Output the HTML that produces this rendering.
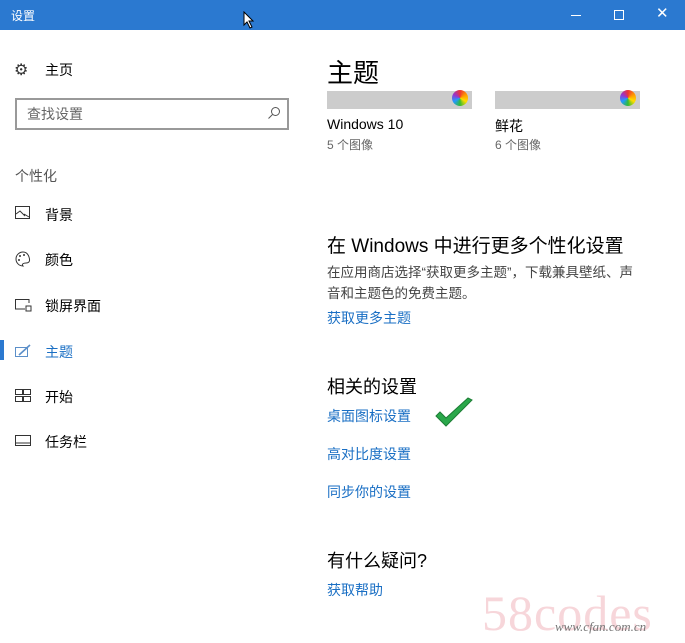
<!DOCTYPE html>
<html><head><meta charset="utf-8"><style>
*{margin:0;padding:0;box-sizing:border-box}
body{width:685px;height:643px;background:#fff;font-family:"Liberation Sans","Noto Sans CJK SC",sans-serif;position:relative;overflow:hidden;color:#000}
.a{position:absolute;white-space:nowrap}
.tb{position:absolute;left:0;top:0;width:685px;height:30px;background:#2b79d0}
.nav{font-size:14px;color:#000}
.lnk{font-size:14px;color:#1a6fc4}
.ic{position:absolute;left:15px}
</style></head><body>
<div class="tb"></div>
<div class="a" style="left:11px;top:7px;font-size:12px;color:#fff">设置</div>
<div class="a" style="left:571px;top:15px;width:10px;height:1px;background:#fff"></div>
<div class="a" style="left:614px;top:10px;width:10px;height:10px;border:1px solid #fff"></div>
<div class="a" style="left:656px;top:4px;font-size:15px;color:#fff">✕</div>
<svg class="a" style="left:243px;top:11px" width="12" height="18"><path d="M1 1 L1 14 L4 11 L7 17 L9 16 L6 10 L10 10 Z" fill="#fff" stroke="#000" stroke-width="1"/></svg>

<div class="a" style="left:14px;top:60px;font-size:16px;color:#333">⚙</div>
<div class="a nav" style="left:45px;top:60px">主页</div>
<div class="a" style="left:15px;top:98px;width:274px;height:32px;border:2px solid #999"></div>
<div class="a" style="left:27px;top:104px;font-size:14px;color:#666">查找设置</div>
<svg class="a" style="left:267px;top:106px" width="14" height="14"><circle cx="8.5" cy="5.5" r="4" fill="none" stroke="#555"/><path d="M5.5 8.5 L1.5 12.5" stroke="#555"/></svg>
<div class="a" style="left:15px;top:166px;font-size:14px;color:#555">个性化</div>

<svg class="ic" style="top:206px" width="16" height="14"><rect x="0.5" y="0.5" width="14" height="12" fill="none" stroke="#333"/><path d="M1 8 L5 5 L10 10 M9 8 L14 11" stroke="#333" fill="none"/></svg>
<div class="a nav" style="left:45px;top:205px">背景</div>
<svg class="ic" style="top:251px" width="16" height="16"><path d="M8 1 A7 7 0 1 0 8 15 C6 13 9 12 11 12 C15 12 15 9 14 6 C13 3 11 1 8 1Z" fill="none" stroke="#333"/><circle cx="5" cy="5" r="1" fill="#333"/><circle cx="9" cy="4" r="1" fill="#333"/><circle cx="4" cy="9" r="1" fill="#333"/></svg>
<div class="a nav" style="left:45px;top:250px">颜色</div>
<svg class="ic" style="top:298px" width="18" height="14"><path d="M10 11 H0.5 V1.5 H14 V5" fill="none" stroke="#333"/><rect x="11" y="8" width="5" height="5" fill="none" stroke="#333"/></svg>
<div class="a nav" style="left:45px;top:296px">锁屏界面</div>
<div class="a" style="left:0;top:340px;width:4px;height:20px;background:#2b79d0"></div>
<svg class="ic" style="top:344px" width="17" height="14"><rect x="0.5" y="3.5" width="12" height="9" fill="none" stroke="#5b8fc9"/><path d="M4 11 L15 1" stroke="#5b8fc9" stroke-width="1.6"/></svg>
<div class="a nav" style="left:45px;top:342px;color:#1a6fc4">主题</div>
<svg class="ic" style="top:389px" width="17" height="14"><rect x="0.5" y="0.5" width="7" height="5" fill="none" stroke="#333"/><rect x="8.5" y="0.5" width="7" height="5" fill="none" stroke="#333"/><rect x="0.5" y="7.5" width="7" height="5" fill="none" stroke="#333"/><rect x="8.5" y="7.5" width="7" height="5" fill="none" stroke="#333"/></svg>
<div class="a nav" style="left:45px;top:387px">开始</div>
<svg class="ic" style="top:435px" width="17" height="12"><rect x="0.5" y="0.5" width="15" height="10" fill="none" stroke="#333"/><path d="M1 8 H15" stroke="#333"/></svg>
<div class="a nav" style="left:45px;top:432px">任务栏</div>

<div class="a" style="left:327px;top:53px;font-size:26px">主题</div>
<div class="a" style="left:327px;top:91px;width:145px;height:18px;background:#ccc"></div>
<div class="a" style="left:495px;top:91px;width:145px;height:18px;background:#ccc"></div>
<div class="a" style="left:452px;top:90px;width:16px;height:16px;border-radius:50%;background:conic-gradient(#e33,#f90,#fd0,#3b3,#29f,#93c,#e33)"></div>
<div class="a" style="left:620px;top:90px;width:16px;height:16px;border-radius:50%;background:conic-gradient(#e33,#f90,#fd0,#3b3,#29f,#93c,#e33)"></div>
<div class="a" style="left:327px;top:116px;font-size:14px">Windows 10</div>
<div class="a" style="left:327px;top:136px;font-size:12px;color:#666">5 个图像</div>
<div class="a" style="left:495px;top:116px;font-size:14px">鲜花</div>
<div class="a" style="left:495px;top:136px;font-size:12px;color:#666">6 个图像</div>

<div class="a" style="left:327px;top:231px;font-size:19px">在 Windows 中进行更多个性化设置</div>
<div class="a" style="left:327px;top:262px;font-size:13.5px;color:#444;line-height:21px;white-space:normal;width:310px">在应用商店选择“获取更多主题”，下载兼具壁纸、声音和主题色的免费主题。</div>
<div class="a lnk" style="left:327px;top:308px">获取更多主题</div>

<div class="a" style="left:327px;top:373px;font-size:18px">相关的设置</div>
<div class="a lnk" style="left:327px;top:406px">桌面图标设置</div>
<svg class="a" style="left:434px;top:396px" width="40" height="34"><path d="M2 20 L12 30 L38 4 L34 2 L12 22 L6 16 Z" fill="#2aa84a" stroke="#1c7d35" stroke-width="1"/></svg>
<div class="a lnk" style="left:327px;top:444px">高对比度设置</div>
<div class="a lnk" style="left:327px;top:482px">同步你的设置</div>

<div class="a" style="left:327px;top:547px;font-size:18px">有什么疑问?</div>
<div class="a lnk" style="left:327px;top:580px">获取帮助</div>

<div class="a" style="left:482px;top:584px;font-size:50px;color:#f7d6da;font-family:'Liberation Serif',serif;letter-spacing:1px">58codes</div>
<div class="a" style="left:555px;top:619px;font-size:13px;color:#777;font-style:italic;font-family:'Liberation Serif',serif">www.cfan.com.cn</div>
</body></html>
